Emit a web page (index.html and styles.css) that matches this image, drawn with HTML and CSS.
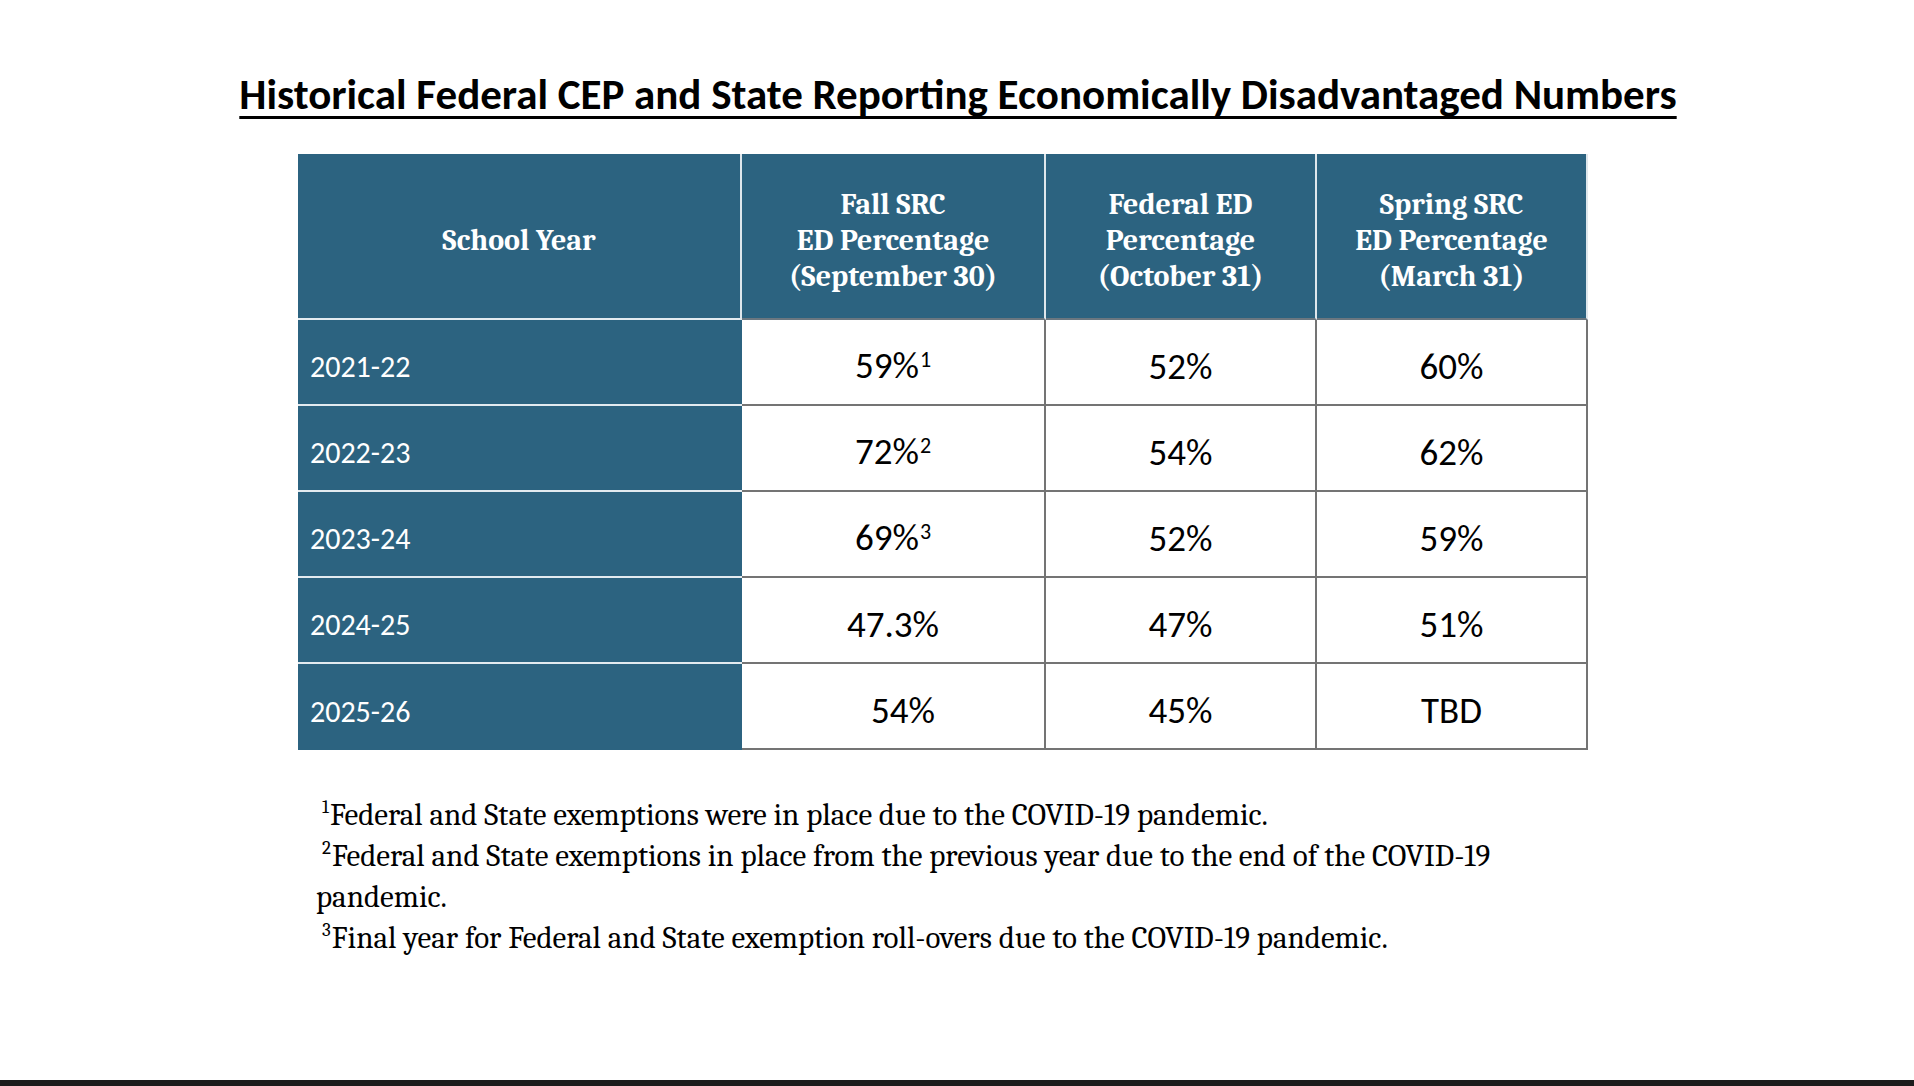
FILE: index.html
```html
<!DOCTYPE html>
<html lang="en">
<head>
<meta charset="utf-8">
<title>Historical Federal CEP and State Reporting Economically Disadvantaged Numbers</title>
<link rel="stylesheet" href="styles.css">
</head>
<body>
<main class="page">
  <h1 class="title">Historical Federal CEP and State Reporting Economically Disadvantaged Numbers</h1>

  <div class="ed-table">
    <div class="cell head first"><span>School Year</span></div>
    <div class="cell head"><span>Fall SRC<br>ED Percentage<br>(September 30)</span></div>
    <div class="cell head"><span>Federal ED<br>Percentage<br>(October 31)</span></div>
    <div class="cell head last"><span>Spring SRC<br>ED Percentage<br>(March 31)</span></div>

    <div class="cell year">2021-22</div>
    <div class="cell val"><span>59%<sup class="ref">1</sup></span></div>
    <div class="cell val">52%</div>
    <div class="cell val">60%</div>

    <div class="cell year">2022-23</div>
    <div class="cell val"><span>72%<sup class="ref">2</sup></span></div>
    <div class="cell val">54%</div>
    <div class="cell val">62%</div>

    <div class="cell year">2023-24</div>
    <div class="cell val"><span>69%<sup class="ref">3</sup></span></div>
    <div class="cell val">52%</div>
    <div class="cell val">59%</div>

    <div class="cell year">2024-25</div>
    <div class="cell val">47.3%</div>
    <div class="cell val">47%</div>
    <div class="cell val">51%</div>

    <div class="cell year">2025-26</div>
    <div class="cell val shift">54%</div>
    <div class="cell val">45%</div>
    <div class="cell val">TBD</div>
  </div>

  <div class="notes">
    <p class="note"><sup class="nref">1</sup>Federal and State exemptions were in place due to the COVID-19 pandemic.</p>
    <p class="note"><sup class="nref">2</sup>Federal and State exemptions in place from the previous year due to the end of the COVID-19 pandemic.</p>
    <p class="note"><sup class="nref">3</sup>Final year for Federal and State exemption roll-overs due to the COVID-19 pandemic.</p>
  </div>
</main>
<div class="bottom-bar"></div>
</body>
</html>
```

FILE: styles.css
```css
* { box-sizing: border-box; }

html, body {
  margin: 0;
  padding: 0;
  background: #ffffff;
}

body {
  min-height: 100vh;
  display: flex;
  flex-direction: column;
  color: #000;
}

.page {
  flex: 1;
  display: flex;
  flex-direction: column;
}

.title {
  margin: 0;
  padding-top: 70px;
  font-family: "Carlito", "Calibri", "Lato", sans-serif;
  font-weight: 700;
  font-size: 43px;
  line-height: 50px;
  text-align: center;
  text-decoration: underline;
  text-decoration-thickness: 3px;
  text-underline-offset: 7px;
  padding-left: 2px;
}

.ed-table {
  margin: 34px 0 0 298px;
  width: 1290px;
  display: grid;
  grid-template-columns: 444px 304px 271px 271px;
  grid-template-rows: 166px repeat(5, 86px);
}

.cell {
  display: flex;
  align-items: center;
  justify-content: center;
}

.head {
  background: #2c6380;
  color: #ffffff;
  font-family: "Caladea", "Cambria", "DejaVu Serif", serif;
  font-weight: 700;
  font-size: 30px;
  line-height: 36px;
  text-align: center;
  border-right: 2px solid #dfe7ec;
  border-bottom: 2px solid #6b7780;
}

.head.first {
  border-bottom: 2px solid #e3ebf0;
}

.head span { display: block; padding-top: 9px; }

.year {
  background: #2c6380;
  color: #ffffff;
  justify-content: flex-start;
  padding: 9px 0 0 12px;
  font-family: "Carlito", "Calibri", "Lato", sans-serif;
  font-size: 30px;
  border-bottom: 2px solid #e3ebf0;
}

.year:nth-last-child(4) { border-bottom: none; }

.val {
  background: #ffffff;
  padding-top: 9px;
  font-family: "Carlito", "Calibri", "Lato", sans-serif;
  font-size: 37px;
  border-right: 2px solid #747474;
  border-bottom: 2px solid #747474;
}

.val span { line-height: 1.2; }

.val.shift { padding-left: 20px; }

.ref {
  font-size: 22px;
  line-height: 0;
  vertical-align: 11px;
  margin-left: 1px;
}

.notes {
  margin: 45px 0 0 316px;
  width: 1230px;
  font-family: "Caladea", "Cambria", "DejaVu Serif", serif;
  font-size: 31px;
  line-height: 41px;
}

.note {
  margin: 0;
}

.nref {
  font-size: 19px;
  line-height: 0;
  vertical-align: 12px;
  margin-left: 6px;
  margin-right: 1px;
}

.bottom-bar {
  height: 6px;
  background: #1c1c1c;
  flex: none;
}
```
